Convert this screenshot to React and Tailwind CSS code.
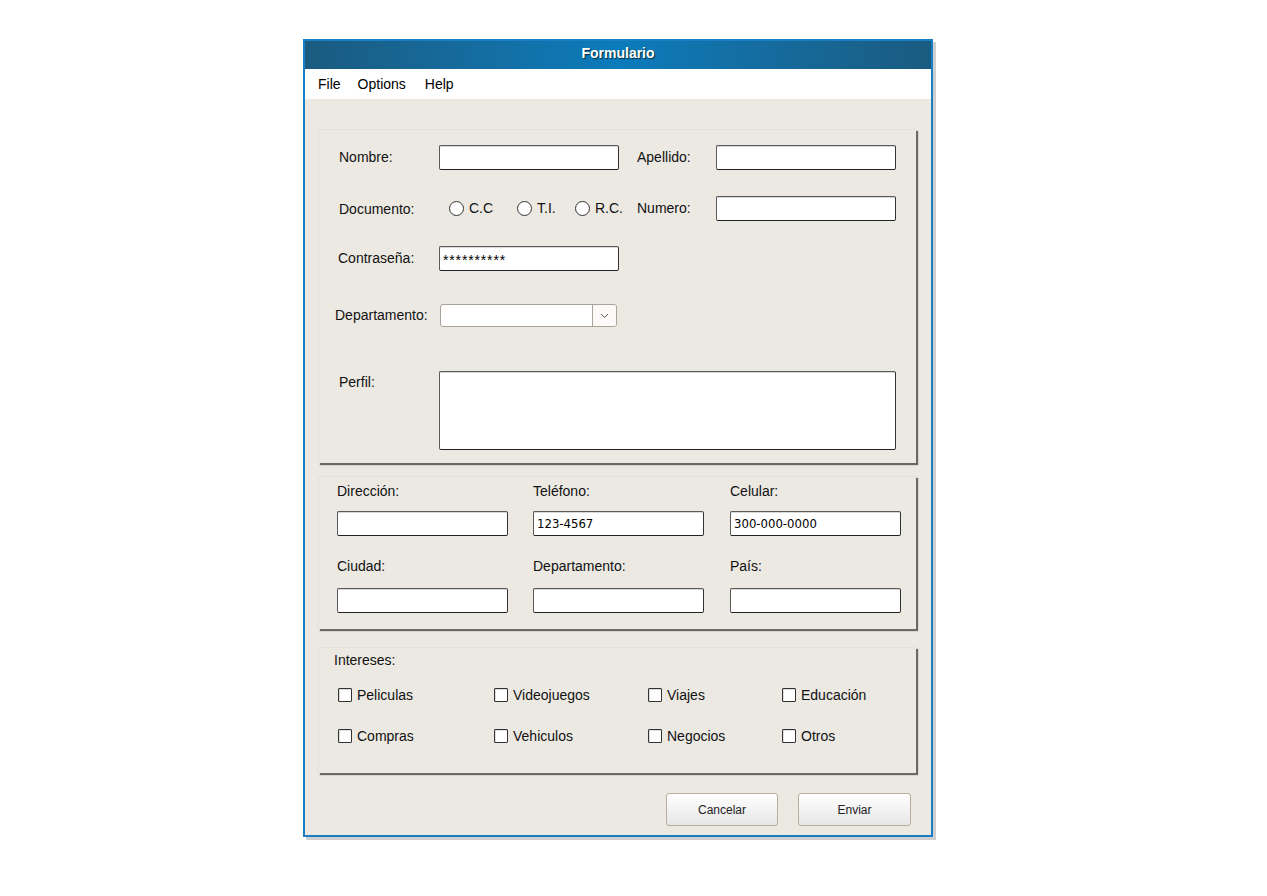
import React from 'react';

const FONT = { fontFamily: '"Liberation Sans", Arial, sans-serif' };
const HAND = { fontFamily: '"Liberation Sans Narrow", "DejaVu Sans Condensed", "Liberation Sans", sans-serif' };

// sketchy text box, like the rest of the mockup
function Box({ w, h = 25, children }) {
    return (
        <div
            className={`${w} bg-white border border-[#5a5a5a] border-b-[#222] border-r-[#333] rounded-[2px] flex items-center pl-[3px] text-[13px] text-black shadow-[inset_0_1px_0_#d8d8d8]`}
            style={{ height: h, ...HAND }}
        >
            {children}
        </div>
    );
}

function Radio({ label, w }) {
    return (
        <div className={`${w} flex items-center gap-[5px] shrink-0`}>
            <span className="w-[15px] h-[15px] rounded-full border border-[#333] bg-white shrink-0" />
            <span className="text-[14px]">{label}</span>
        </div>
    );
}

function Check({ label }) {
    return (
        <div className="flex items-center gap-[5px] h-[16px]">
            <span className="w-[14px] h-[14px] border border-[#333] rounded-[1px] bg-white shadow-[inset_1px_1px_0_#ddd]" />
            <span className="text-[14px] text-[#111]">{label}</span>
        </div>
    );
}

const panel = 'w-[598px] bg-[#ece9e3] border-t border-l border-[#e4e1da] shadow-[2px_2px_1px_rgba(0,0,0,0.55)]';

export default function App() {
    return (
        <div className="min-h-screen bg-white" style={FONT}>
            <div className="pt-[39px] pl-[303px]">
                <div className="w-[630px] h-[798px] border-2 border-[#1a7ec3] shadow-[3px_3px_0_0_#cfcfcf] flex flex-col bg-[#ece9e3]">
                    {/* title bar */}
                    <div className="h-[28px] shrink-0 bg-linear-to-r from-[#1a5b80] via-[#0a7bbb] to-[#1a5b80] flex items-center justify-center pb-[3px]">
                        <span className="text-white font-bold text-[14px] [text-shadow:1px_1px_1px_rgba(0,0,0,0.65)]">Formulario</span>
                    </div>

                    {/* menu */}
                    <div className="h-[30px] shrink-0 bg-white flex items-center pl-[13px] text-[14px] text-black">
                        <span>File</span>
                        <span className="ml-[17px]">Options</span>
                        <span className="ml-[19px]">Help</span>
                    </div>

                    {/* body */}
                    <div className="flex-1 pl-[13px] pt-[30px] text-[14px] text-[#111]">
                        {/* panel 1 */}
                        <div className={`${panel} h-[334px] pt-[15px] pl-[19px]`}>
                            <div className="flex items-center h-[25px] pl-[1px]">
                                <span className="w-[100px]">Nombre:</span>
                                <Box w="w-[180px]" />
                                <span className="w-[79px] ml-[18px]">Apellido:</span>
                                <Box w="w-[180px]" />
                            </div>

                            <div className="flex items-center h-[25px] mt-[26px] pl-[1px]">
                                <span className="w-[110px] pt-[2px]">Documento:</span>
                                <Radio label="C.C" w="w-[68px]" />
                                <Radio label="T.I." w="w-[58px]" />
                                <Radio label="R.C." w="w-[62px]" />
                                <span className="w-[79px]">Numero:</span>
                                <Box w="w-[180px]" />
                            </div>

                            <div className="flex items-center h-[25px] mt-[25px]">
                                <span className="w-[101px]">Contraseña:</span>
                                <Box w="w-[180px]">
                                    <span className="text-[14px] tracking-[0.85px] pt-[4px] text-black" style={FONT}>**********</span>
                                </Box>
                            </div>

                            <div className="flex items-center h-[23px] mt-[33px] -ml-[3px]">
                                <span className="w-[105px]">Departamento:</span>
                                <div className="w-[177px] h-[23px] flex bg-white border border-[#aaa39a] rounded-[3px] overflow-hidden">
                                    <div className="flex-1" />
                                    <div className="w-[24px] border-l border-[#aaa39a] bg-[#fbfaf8] flex items-center justify-center">
                                        <svg width="9" height="6" viewBox="0 0 9 6" fill="none">
                                            <path d="M1 1l3.5 3.5L8 1" stroke="#555" strokeWidth="1" />
                                        </svg>
                                    </div>
                                </div>
                            </div>

                            <div className="flex items-start mt-[44px] pl-[1px]">
                                <span className="w-[100px] pt-[3px] leading-[16px]">Perfil:</span>
                                <Box w="w-[457px]" h={79} />
                            </div>
                        </div>

                        {/* panel 2 */}
                        <div className={`${panel} h-[153px] mt-[13px] pt-[6px] pl-[18px]`}>
                            <div className="grid grid-cols-[196px_197px_171px] leading-[16px]">
                                <span>Dirección:</span>
                                <span>Teléfono:</span>
                                <span>Celular:</span>
                            </div>
                            <div className="grid grid-cols-[196px_197px_171px] mt-[12px]">
                                <Box w="w-[171px]" />
                                <Box w="w-[171px]">123-4567</Box>
                                <Box w="w-[171px]">300-000-0000</Box>
                            </div>
                            <div className="grid grid-cols-[196px_197px_171px] leading-[16px] mt-[22px]">
                                <span>Ciudad:</span>
                                <span>Departamento:</span>
                                <span>País:</span>
                            </div>
                            <div className="grid grid-cols-[196px_197px_171px] mt-[14px]">
                                <Box w="w-[171px]" />
                                <Box w="w-[171px]" />
                                <Box w="w-[171px]" />
                            </div>
                        </div>

                        {/* panel 3 */}
                        <div className={`${panel} h-[126px] mt-[18px] pt-[4px] pl-[15px]`}>
                            <div className="leading-[16px]">Intereses:</div>
                            <div className="grid grid-cols-[156px_154px_134px_1fr] gap-y-[25px] mt-[19px] pl-[4px]">
                                <Check label="Peliculas" />
                                <Check label="Videojuegos" />
                                <Check label="Viajes" />
                                <Check label="Educación" />
                                <Check label="Compras" />
                                <Check label="Vehiculos" />
                                <Check label="Negocios" />
                                <Check label="Otros" />
                            </div>
                        </div>

                        {/* buttons */}
                        <div className="w-[598px] flex justify-end gap-[20px] pr-[5px] mt-[20px]">
                            <button className="w-[112px] h-[33px] rounded-[3px] border border-[#b9ae9c] bg-linear-to-b from-white to-[#e6e6e6] text-[12px] text-[#222]">
                                Cancelar
                            </button>
                            <button className="w-[113px] h-[33px] rounded-[3px] border border-[#b9ae9c] bg-linear-to-b from-white to-[#e6e6e6] text-[12px] text-[#222]">
                                Enviar
                            </button>
                        </div>
                    </div>
                </div>
            </div>
        </div>
    );
}
